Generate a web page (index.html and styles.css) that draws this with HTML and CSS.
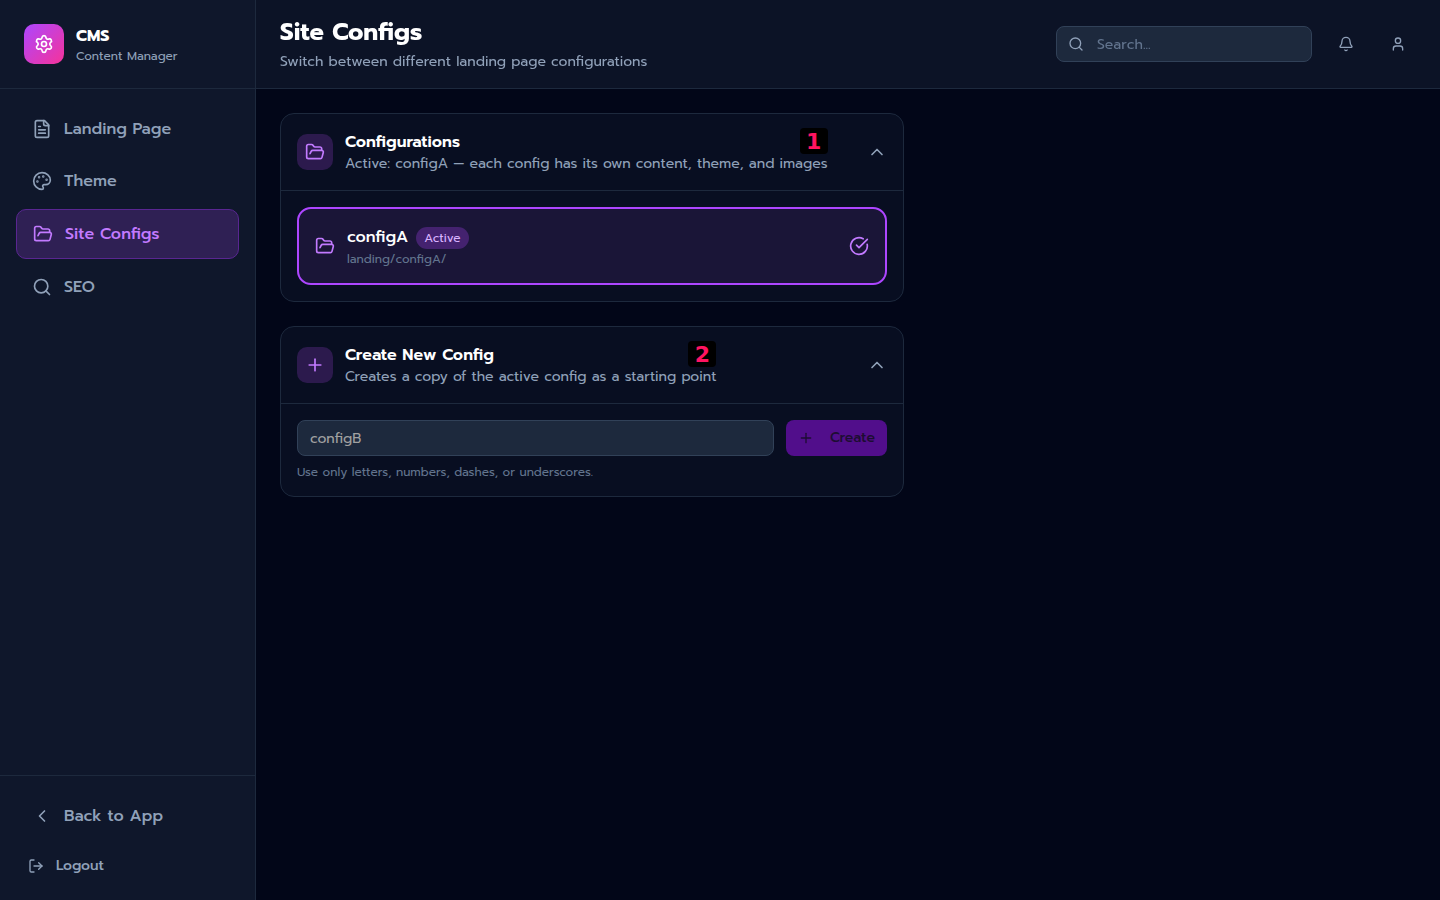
FILE: index.html
```html
<!DOCTYPE html>
<html lang="en">
<head>
    <meta charset="UTF-8">
    <title>Site Configs - CMS</title>
    <meta name="viewport" content="width=device-width, initial-scale=1.0">
    <link rel="stylesheet" href="styles.css">
</head>
<body>

<aside class="sidebar">
    <div class="brand">
        <div class="brand-logo">
            <svg class="icon icon-md" viewBox="0 0 24 24"><path d="M9.671 4.136a2.34 2.34 0 0 1 4.659 0 2.34 2.34 0 0 0 3.319 1.915 2.34 2.34 0 0 1 2.33 4.033 2.34 2.34 0 0 0 0 3.831 2.34 2.34 0 0 1-2.33 4.033 2.34 2.34 0 0 0-3.319 1.915 2.34 2.34 0 0 1-4.659 0 2.34 2.34 0 0 0-3.32-1.915 2.34 2.34 0 0 1-2.33-4.033 2.34 2.34 0 0 0 0-3.831A2.34 2.34 0 0 1 6.35 6.051a2.34 2.34 0 0 0 3.319-1.915"/><circle cx="12" cy="12" r="3"/></svg>
        </div>
        <div>
            <div class="brand-name">CMS</div>
            <div class="brand-sub">Content Manager</div>
        </div>
    </div>

    <nav class="nav">
        <a class="nav-item" href="#">
            <svg class="icon icon-md" viewBox="0 0 24 24"><path d="M15 2H6a2 2 0 0 0-2 2v16a2 2 0 0 0 2 2h12a2 2 0 0 0 2-2V7Z"/><path d="M14 2v4a2 2 0 0 0 2 2h4"/><path d="M10 9H8"/><path d="M16 13H8"/><path d="M16 17H8"/></svg>
            Landing Page
        </a>
        <a class="nav-item" href="#">
            <svg class="icon icon-md" viewBox="0 0 24 24"><circle class="dot" cx="13.5" cy="6.5" r=".5"/><circle class="dot" cx="17.5" cy="10.5" r=".5"/><circle class="dot" cx="8.5" cy="7.5" r=".5"/><circle class="dot" cx="6.5" cy="12.5" r=".5"/><path d="M12 2C6.5 2 2 6.5 2 12s4.5 10 10 10c.926 0 1.648-.746 1.648-1.688 0-.437-.18-.835-.437-1.125-.29-.289-.438-.652-.438-1.125a1.64 1.64 0 0 1 1.668-1.668h1.996c3.051 0 5.555-2.503 5.555-5.554C21.965 6.012 17.461 2 12 2z"/></svg>
            Theme
        </a>
        <a class="nav-item active" href="#">
            <svg class="icon icon-md" viewBox="0 0 24 24"><path d="m6 14 1.5-2.9A2 2 0 0 1 9.24 10H20a2 2 0 0 1 1.94 2.5l-1.54 6a2 2 0 0 1-1.95 1.5H4a2 2 0 0 1-2-2V5a2 2 0 0 1 2-2h3.9a2 2 0 0 1 1.69.9l.81 1.2a2 2 0 0 0 1.67.9H18a2 2 0 0 1 2 2v2"/></svg>
            Site Configs
        </a>
        <a class="nav-item" href="#">
            <svg class="icon icon-md" viewBox="0 0 24 24"><circle cx="11" cy="11" r="8"/><path d="m21 21-4.34-4.34"/></svg>
            SEO
        </a>
    </nav>

    <div class="sidebar-footer">
        <a class="nav-item" href="#">
            <svg class="icon icon-md" viewBox="0 0 24 24"><path d="m15 18-6-6 6-6"/></svg>
            Back to App
        </a>
        <button class="logout" type="button">
            <svg class="icon icon-sm" viewBox="0 0 24 24"><path d="m16 17 5-5-5-5"/><path d="M21 12H9"/><path d="M9 21H5a2 2 0 0 1-2-2V5a2 2 0 0 1 2-2h4"/></svg>
            Logout
        </button>
    </div>
</aside>

<div class="page">
    <header class="topbar">
        <div>
            <h1>Site Configs</h1>
            <p class="subtitle">Switch between different landing page configurations</p>
        </div>
        <div class="actions">
            <label class="search">
                <svg class="icon icon-sm" viewBox="0 0 24 24"><circle cx="11" cy="11" r="8"/><path d="m21 21-4.34-4.34"/></svg>
                <input class="field" type="text" placeholder="Search..." aria-label="Search">
            </label>
            <button class="icon-btn" type="button" aria-label="Notifications">
                <svg class="icon icon-sm" viewBox="0 0 24 24"><path d="M10.268 21a2 2 0 0 0 3.464 0"/><path d="M3.262 15.326A1 1 0 0 0 4 17h16a1 1 0 0 0 .74-1.673C19.41 13.956 18 12.499 18 8A6 6 0 0 0 6 8c0 4.499-1.411 5.956-2.738 7.326"/></svg>
            </button>
            <button class="icon-btn" type="button" aria-label="Account">
                <svg class="icon icon-sm" viewBox="0 0 24 24"><path d="M19 21v-2a4 4 0 0 0-4-4H9a4 4 0 0 0-4 4v2"/><circle cx="12" cy="7" r="4"/></svg>
            </button>
        </div>
    </header>

    <main class="content">
        <section class="card">
            <button class="card-header" type="button">
                <span class="card-icon">
                    <svg class="icon icon-md" viewBox="0 0 24 24"><path d="m6 14 1.5-2.9A2 2 0 0 1 9.24 10H20a2 2 0 0 1 1.94 2.5l-1.54 6a2 2 0 0 1-1.95 1.5H4a2 2 0 0 1-2-2V5a2 2 0 0 1 2-2h3.9a2 2 0 0 1 1.69.9l.81 1.2a2 2 0 0 0 1.67.9H18a2 2 0 0 1 2 2v2"/></svg>
                </span>
                <span class="card-text">
                    <span class="card-title">Configurations</span>
                    <span class="card-sub">Active: configA — each config has its own content, theme, and images</span>
                    <span class="marker">1</span>
                </span>
                <svg class="icon icon-md chevron" viewBox="0 0 24 24"><path d="m18 15-6-6-6 6"/></svg>
            </button>
            <div class="card-body">
                <div class="config">
                    <svg class="icon icon-md" viewBox="0 0 24 24"><path d="m6 14 1.5-2.9A2 2 0 0 1 9.24 10H20a2 2 0 0 1 1.94 2.5l-1.54 6a2 2 0 0 1-1.95 1.5H4a2 2 0 0 1-2-2V5a2 2 0 0 1 2-2h3.9a2 2 0 0 1 1.69.9l.81 1.2a2 2 0 0 0 1.67.9H18a2 2 0 0 1 2 2v2"/></svg>
                    <div class="config-text">
                        <div class="config-title">
                            <span>configA</span>
                            <span class="badge">Active</span>
                        </div>
                        <div class="config-path">landing/configA/</div>
                    </div>
                    <svg class="icon icon-md" viewBox="0 0 24 24"><path d="M21.801 10A10 10 0 1 1 17 3.335"/><path d="m9 11 3 3L22 4"/></svg>
                </div>
            </div>
        </section>

        <section class="card">
            <button class="card-header" type="button">
                <span class="card-icon">
                    <svg class="icon icon-md" viewBox="0 0 24 24"><path d="M5 12h14"/><path d="M12 5v14"/></svg>
                </span>
                <span class="card-text">
                    <span class="card-title">Create New Config</span>
                    <span class="card-sub">Creates a copy of the active config as a starting point</span>
                    <span class="marker">2</span>
                </span>
                <svg class="icon icon-md chevron" viewBox="0 0 24 24"><path d="m18 15-6-6-6 6"/></svg>
            </button>
            <div class="card-body">
                <div class="create-row">
                    <input class="field" type="text" placeholder="configB" aria-label="Config name">
                    <button class="create-btn" type="button" disabled>
                        <svg class="icon icon-sm" viewBox="0 0 24 24"><path d="M5 12h14"/><path d="M12 5v14"/></svg>
                        Create
                    </button>
                </div>
                <p class="help">Use only letters, numbers, dashes, or underscores.</p>
            </div>
        </section>
    </main>
</div>

</body>
</html>
```
FILE: styles.css
```css
* { box-sizing: border-box; margin: 0; padding: 0; }
body { display: flex; min-height: 100vh; background: #020618; color: #fff; font-family: Prompt, "Noto Sans", sans-serif; font-size: 14px; line-height: 20px; }
button, input { font: inherit; color: inherit; border: none; background: none; }
button { cursor: pointer; }
a { color: inherit; text-decoration: none; }

.icon { flex: none; fill: none; stroke: currentColor; stroke-width: 2; stroke-linecap: round; stroke-linejoin: round; }
.icon-md { width: 20px; height: 20px; }
.icon-sm { width: 16px; height: 16px; }
.dot { fill: currentColor; }

/* Sidebar */
.sidebar { display: flex; flex-direction: column; flex: none; width: 256px; background: #0f172b; border-right: 1px solid #1d293d; }
.brand { display: flex; align-items: center; gap: 12px; padding: 24px; border-bottom: 1px solid #1d293d; }
.brand-logo { display: flex; align-items: center; justify-content: center; width: 40px; height: 40px; border-radius: 10px; background: linear-gradient(135deg, #ad46ff, #f6339a); }
.brand-name { font-size: 16px; line-height: 24px; font-weight: 700; }
.brand-sub { font-size: 12px; line-height: 16px; color: #90a1b9; }
.nav { display: flex; flex-direction: column; flex: 1; gap: 4px; padding: 16px; }
.nav-item { display: flex; align-items: center; gap: 12px; padding: 12px 16px; border-radius: 10px; font-size: 16px; line-height: 24px; font-weight: 500; color: #90a1b9; }
.nav-item.active { border: 1px solid #592691; background: #2f2054; color: #c27aff; }
.sidebar-footer { display: flex; flex-direction: column; gap: 8px; padding: 16px; border-top: 1px solid #1d293d; }
.logout { display: flex; align-items: center; gap: 12px; padding: 8px 12px; color: #90a1b9; font-weight: 500; }

/* Top bar */
.page { flex: 1; min-width: 0; }
.topbar { position: sticky; top: 0; z-index: 10; display: flex; align-items: center; justify-content: space-between; padding: 16px 24px; background: rgba(15, 23, 43, 0.8); backdrop-filter: blur(12px); border-bottom: 1px solid #1d293d; }
h1 { font-size: 24px; line-height: 32px; font-weight: 700; }
.subtitle { margin-top: 4px; color: #90a1b9; }
.actions { display: flex; align-items: center; gap: 16px; }
.search { position: relative; display: flex; width: 256px; color: #90a1b9; }
.search .icon { position: absolute; top: 10px; left: 12px; }
.search .field { padding-left: 40px; }
.search .field::placeholder { color: #62748e; }
.icon-btn { display: flex; align-items: center; justify-content: center; width: 36px; height: 36px; color: #90a1b9; }

/* Form field */
.field { flex: 1; min-width: 0; height: 36px; padding: 0 12px; border: 1px solid #314158; border-radius: 8px; background: #1d293d; color: #fff; }
.field::placeholder { color: #a1a1a1; }

/* Cards */
.content { display: flex; flex-direction: column; gap: 24px; max-width: 672px; padding: 24px; }
.card { border: 1px solid #1d293d; border-radius: 14px; background: #080e21; }
.card-header { display: flex; align-items: center; gap: 12px; width: 100%; padding: 16px; text-align: left; }
.card-icon { display: flex; align-items: center; justify-content: center; width: 36px; height: 36px; border-radius: 10px; background: #2c1a4d; color: #c27aff; }
.card-text { position: relative; display: flex; flex-direction: column; }
.card-title { font-size: 16px; line-height: 24px; font-weight: 600; }
.card-sub { color: #90a1b9; }
.marker { position: absolute; top: -2px; right: 0; width: 28px; height: 26px; border-radius: 4px; background: #000; color: #ff1461; font-family: "DejaVu Sans", sans-serif; font-size: 22px; line-height: 28px; font-weight: 700; text-align: center; }
.chevron { margin-left: auto; color: #90a1b9; }
.card-body { padding: 16px; border-top: 1px solid #1d293d; }

.config { display: flex; align-items: center; gap: 12px; padding: 16px; border: 2px solid #ad46ff; border-radius: 14px; background: #1a1537; color: #c27aff; }
.config-text { display: flex; flex-direction: column; gap: 2px; flex: 1; }
.config-title { display: flex; align-items: baseline; gap: 8px; height: 24px; font-size: 16px; line-height: 24px; font-weight: 500; color: #fff; }
.badge { padding: 3px 8px; border-radius: 11px; background: #44226f; color: #dab2ff; font-size: 12px; line-height: 16px; font-weight: 400; }
.config-path { font-size: 12px; line-height: 16px; color: #62748e; }

.create-row { display: flex; gap: 12px; }
.create-btn { display: flex; align-items: center; gap: 16px; height: 36px; padding: 0 12px; border-radius: 8px; background: #510e8b; color: #1d0d33; font-weight: 500; }
.help { margin-top: 8px; font-size: 12px; line-height: 16px; color: #62748e; }
```
